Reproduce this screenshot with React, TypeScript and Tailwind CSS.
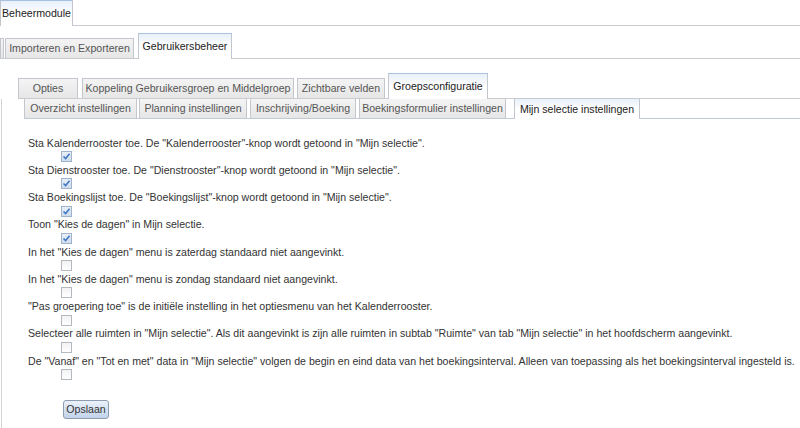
import React from "react";

type TabProps = { label: string; w: number; active?: boolean; h: number; mr?: number; noTop?: boolean };

function Tab({ label, w, active, h, mr = 0, noTop }: TabProps) {
  const base =
    "flex items-center justify-center shrink-0 whitespace-nowrap border-l border-r border-[#c3c6cc]";
  if (active) {
    return (
      <div
        className={`${base} ${noTop ? "" : "border-t border-t-[#a9c1e0]"} relative -mb-px bg-gradient-to-b from-[#e8f0fa] via-white to-white text-[#222]`}
        style={{ width: w, height: h + 1, marginRight: mr }}
      >
        {label}
      </div>
    );
  }
  return (
    <div
      className={`${base} ${noTop ? "" : "border-t"} bg-gradient-to-b from-[#f4f4f4] to-[#e6e6e6] text-[#555]`}
      style={{ width: w, height: h, marginRight: mr }}
    >
      {label}
    </div>
  );
}

const items: { text: string; checked: boolean }[] = [
  { text: 'Sta Kalenderrooster toe. De "Kalenderrooster"-knop wordt getoond in "Mijn selectie".', checked: true },
  { text: 'Sta Dienstrooster toe. De "Dienstrooster"-knop wordt getoond in "Mijn selectie".', checked: true },
  { text: 'Sta Boekingslijst toe. De "Boekingslijst"-knop wordt getoond in "Mijn selectie".', checked: true },
  { text: 'Toon "Kies de dagen" in Mijn selectie.', checked: true },
  { text: 'In het "Kies de dagen" menu is zaterdag standaard niet aangevinkt.', checked: false },
  { text: 'In het "Kies de dagen" menu is zondag standaard niet aangevinkt.', checked: false },
  { text: '"Pas groepering toe" is de initiële instelling in het optiesmenu van het Kalenderrooster.', checked: false },
  {
    text: 'Selecteer alle ruimten in "Mijn selectie". Als dit aangevinkt is zijn alle ruimten in subtab "Ruimte" van tab "Mijn selectie" in het hoofdscherm aangevinkt.',
    checked: false,
  },
  {
    text: 'De "Vanaf" en "Tot en met" data in "Mijn selectie" volgen de begin en eind data van het boekingsinterval. Alleen van toepassing als het boekingsinterval ingesteld is.',
    checked: false,
  },
];

function Checkbox({ checked }: { checked: boolean }) {
  if (checked) {
    return (
      <div className="w-[11px] h-[11px] border border-[#9fb3cc] bg-gradient-to-b from-[#e9eff7] to-[#cfdcec] flex items-center justify-center">
        <svg width="9" height="9" viewBox="0 0 9 9">
          <path d="M1.5 4.5 L3.6 6.6 L7.6 1.8" fill="none" stroke="#3f78c4" strokeWidth="1.6" />
        </svg>
      </div>
    );
  }
  return <div className="w-[11px] h-[11px] border border-[#b4b8bf] bg-gradient-to-b from-[#f2f2f2] to-white" />;
}

export default function App() {
  return (
    <div className="w-[800px] h-[428px] overflow-hidden bg-white text-[10.6px] leading-none font-['Liberation_Sans',Arial,sans-serif]">
      {/* Row 1 */}
      <div className="flex items-end h-[26px] border-b border-[#c8cbd0]">
        <Tab label="Beheermodule" w={73} h={25} active />
      </div>
      {/* Row 2 */}
      <div className="flex items-end h-[33px] border-b border-[#c8cbd0]">
        <Tab label="" w={4} h={20} mr={1} />
        <Tab label="Importeren en Exporteren" w={129} h={20} mr={4} />
        <Tab label="Gebruikersbeheer" w={94} h={25} active />
      </div>
      {/* Row 3 */}
      <div className="flex items-end h-[40px] ml-[18px] border-b border-[#c8cbd0]">
        <Tab label="Opties" w={60} h={20} mr={4} />
        <Tab label="Koppeling Gebruikersgroep en Middelgroep" w={212} h={20} mr={3} />
        <Tab label="Zichtbare velden" w={88} h={20} mr={3} />
        <Tab label="Groepsconfiguratie" w={100} h={25} active />
      </div>
      {/* Panel */}
      <div className="ml-px border-l border-[#d0d3d8] h-[329px]">
        {/* Row 4 */}
        <div className="flex items-end h-[20px] ml-[22px] border-b border-[#c3c9d2]">
          <Tab label="Overzicht instellingen" w={113} h={19} mr={2} noTop />
          <Tab label="Planning instellingen" w={108} h={19} mr={3} noTop />
          <Tab label="Inschrijving/Boeking" w={106} h={19} mr={3} noTop />
          <Tab label="Boekingsformulier instellingen" w={147} h={19} mr={8} noTop />
          <Tab label="Mijn selectie instellingen" w={126} h={19} active noTop />
        </div>
        {/* Content */}
        <div className="pl-[26px] pt-[17px] text-[#333]">
          {items.map((it, i) => (
            <div key={i}>
              <div className="h-[14px] flex items-center whitespace-nowrap">{it.text}</div>
              <div className="h-[13.25px] flex items-center pl-[33px]">
                <Checkbox checked={it.checked} />
              </div>
            </div>
          ))}
          <div className="pl-[35px] mt-[19px]">
            <button className="w-[46px] h-[19px] rounded-[3px] border border-[#8d9cb0] bg-gradient-to-b from-[#eaf1fa] to-[#c2d4ea] text-[#333] text-[10.6px] leading-none flex items-center justify-center">
              Opslaan
            </button>
          </div>
        </div>
      </div>
    </div>
  );
}
